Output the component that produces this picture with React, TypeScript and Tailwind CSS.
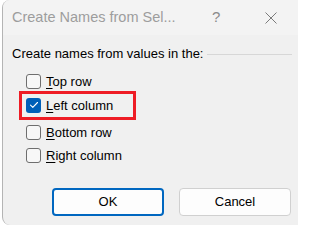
import React from 'react';

const options = [
  { key: 'T', rest: 'op row', checked: false, mt: 'mt-[10px]' },
  { key: 'L', rest: 'eft column', checked: true, mt: 'mt-[9px]' },
  { key: 'B', rest: 'ottom row', checked: false, mt: 'mt-[12px]' },
  { key: 'R', rest: 'ight column', checked: false, mt: 'mt-[8px]' },
];

function CheckBox({ checked }: { checked: boolean }) {
  if (checked) {
    return (
      <div className="w-[15px] h-[15px] rounded-[3px] bg-[#005fb8] flex items-center justify-center shrink-0">
        <svg width="10" height="8" viewBox="0 0 10 8" fill="none">
          <path d="M1.5 4.2 L3.8 6.3 L8.5 1.5" stroke="white" strokeWidth="1.1" strokeLinecap="round" strokeLinejoin="round" />
        </svg>
      </div>
    );
  }
  return <div className="w-[15px] h-[15px] rounded-[3px] border border-[#6e6e6e] bg-[#f7f7f7] shrink-0" />;
}

export default function App() {
  return (
    <div
      className="w-[298px] h-[225px] bg-white overflow-hidden pl-[2px]"
      style={{ fontFamily: '"Liberation Sans", Arial, sans-serif' }}
    >
      <div className="h-[225px] w-[296px] bg-[#f0f0f0] border-l border-[#b4b4b4] rounded-tl-[8px] rounded-bl-[8px] flex flex-col overflow-hidden">
        {/* Title bar */}
        <div className="h-[35px] bg-[#f3f3f3] flex items-center shrink-0">
          <span className="ml-[9px] text-[14.5px] text-[#9d9d9d] w-[190px] whitespace-nowrap">Create Names from Sel...</span>
          <span className="ml-[10px] text-[15px] text-[#8a8a8a]">?</span>
          <svg className="ml-[45px]" width="12" height="12" viewBox="0 0 12 12">
            <path d="M0.5 0.5 L11.5 11.5 M11.5 0.5 L0.5 11.5" stroke="#7a7a7a" strokeWidth="1" />
          </svg>
        </div>

        {/* Body */}
        <div className="flex-1 flex flex-col">
          <div className="flex items-center mt-[9px] pl-[9px] pr-[6px]">
            <span className="text-[13px] text-black whitespace-nowrap">Create names from values in the:</span>
            <div className="flex-1 h-px bg-[#d7d7d7] ml-[4px] mt-[1px]" />
          </div>

          <div className="flex flex-col pl-[23px]">
            {options.map((o) => (
              <div key={o.key} className={`relative flex items-center gap-[5px] ${o.mt}`}>
                <CheckBox checked={o.checked} />
                <span className="text-[13px] text-black leading-[15px]">
                  <span className="underline underline-offset-[2px]">{o.key}</span>
                  {o.rest}
                </span>
                {o.checked && (
                  <div className="absolute left-[-7px] top-[-7px] w-[117px] h-[29px] border-[3px] border-[#ee1c25]" />
                )}
              </div>
            ))}
          </div>

          <div className="flex gap-[15px] pl-[49px] mt-[25px]">
            <button className="w-[112px] h-[28px] rounded-[4px] border-2 border-[#0067c0] bg-[#fdfdfd] text-[13px] text-black">
              OK
            </button>
            <button className="w-[112px] h-[28px] rounded-[4px] border border-[#d0d0d0] bg-[#fdfdfd] text-[13px] text-black">
              Cancel
            </button>
          </div>
        </div>
      </div>
    </div>
  );
}
